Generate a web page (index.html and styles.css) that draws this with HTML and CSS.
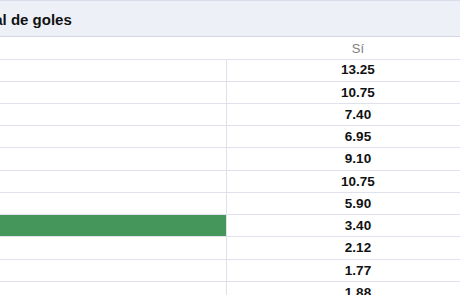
FILE: index.html
```html
<!DOCTYPE html>
<html lang="es">
<head>
<meta charset="utf-8">
<title>Total de goles</title>
<link rel="stylesheet" href="styles.css">
</head>
<body>
<section class="market">
  <header class="market-title">Total de goles</header>
  <div class="odds">
    <div class="col-head">Sí</div>
    <div class="cell label"></div><div class="cell price">13.25</div>
    <div class="cell label"></div><div class="cell price">10.75</div>
    <div class="cell label"></div><div class="cell price">7.40</div>
    <div class="cell label"></div><div class="cell price">6.95</div>
    <div class="cell label"></div><div class="cell price">9.10</div>
    <div class="cell label"></div><div class="cell price">10.75</div>
    <div class="cell label"></div><div class="cell price">5.90</div>
    <div class="cell label selected"></div><div class="cell price">3.40</div>
    <div class="cell label"></div><div class="cell price">2.12</div>
    <div class="cell label"></div><div class="cell price">1.77</div>
    <div class="cell label"></div><div class="cell price">1.88</div>
    <div class="cell label"></div><div class="cell price">2.40</div>
  </div>
</section>
</body>
</html>
```

FILE: styles.css
```css
html, body {
  margin: 0;
  padding: 0;
  overflow: hidden;
  background: #ffffff;
}

body {
  font-family: "Liberation Sans", Arial, sans-serif;
  color: #111111;
}

.market {
  width: 523px;
  margin-left: -34px;
}

.market-title {
  box-sizing: border-box;
  height: 37px;
  display: flex;
  align-items: center;
  padding: 1px 0 0 6px;
  background: #eef0f8;
  border-top: 1px solid #dadeea;
  border-bottom: 1px solid #d4d8e5;
  font-size: 15px;
  font-weight: bold;
  color: #111111;
}

.odds {
  display: grid;
  grid-template-columns: 261px 1fr;
  grid-auto-rows: 22.25px;
}

/* column caption spans the whole row, text sits over the price column */
.col-head {
  grid-column: 1 / -1;
  box-sizing: border-box;
  height: 23px;
  display: grid;
  grid-template-columns: 261px 1fr;
  border-bottom: 1px solid #dfe2ec;
  font-size: 13px;
  color: #808080;
  align-items: center;
  text-align: center;
}

.col-head::before {
  content: "";
}

.cell {
  box-sizing: border-box;
  border-bottom: 1px solid #dfe2ec;
}

.label {
  border-right: 1px solid #dfe2ec;
}

.label.selected {
  background: #44965a;
}

.price {
  display: flex;
  align-items: center;
  justify-content: center;
  font-size: 13.5px;
  font-weight: bold;
  color: #111111;
}
```
